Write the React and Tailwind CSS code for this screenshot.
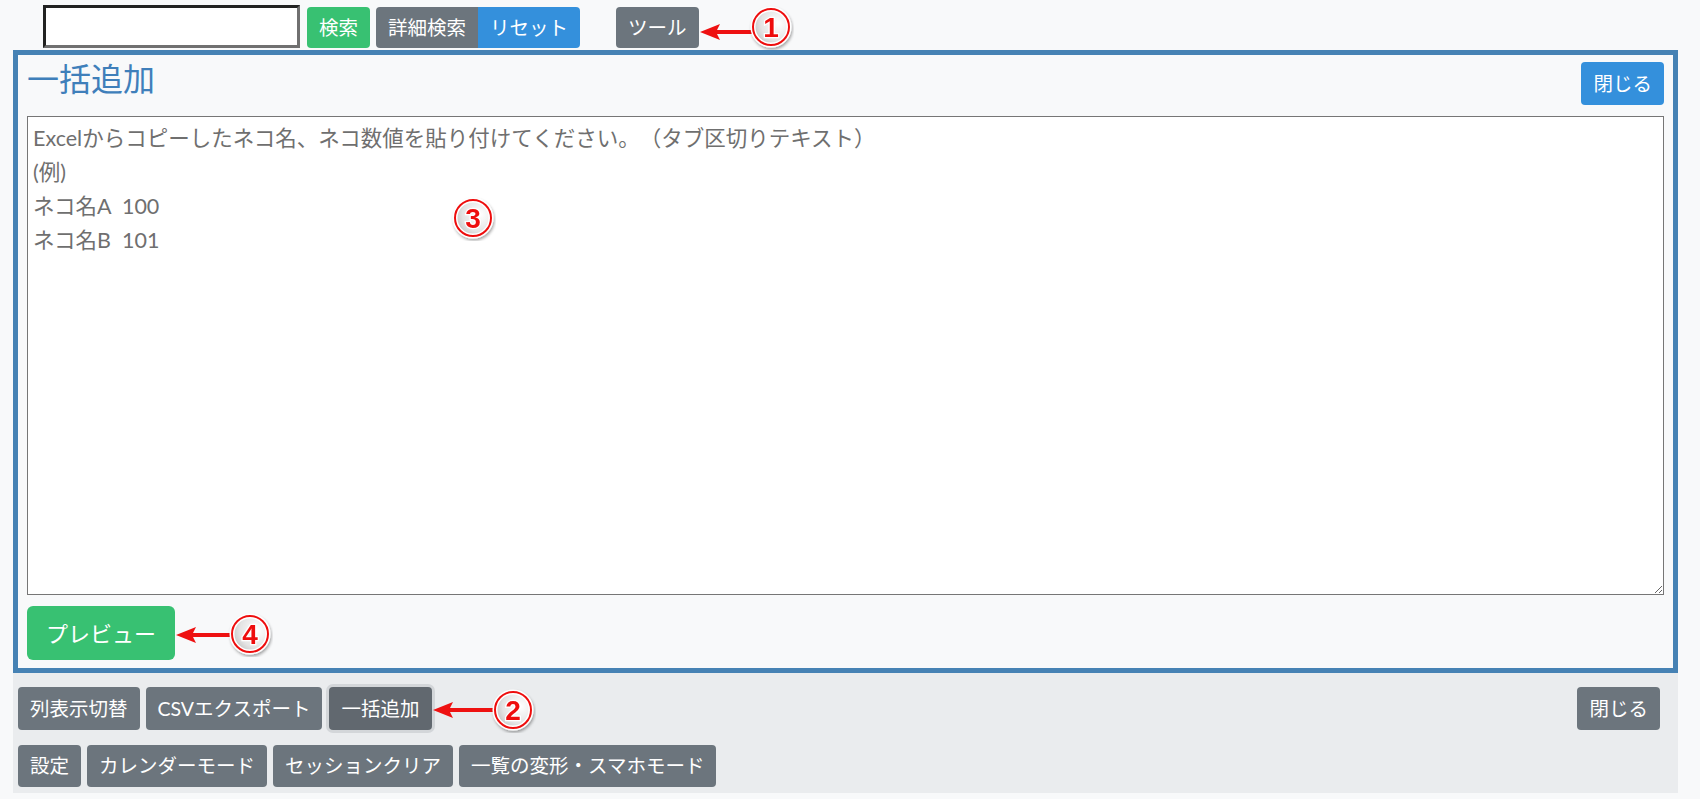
import React from 'react';

const font = { fontFamily: 'Lato, "Noto Sans CJK JP", sans-serif' };

const Btn = ({ children, color = 'gray', className = '' }) => {
  const colors = {
    gray: 'bg-[#6c757d]',
    dark: 'bg-[#61686f] ring-[3px] ring-[#d3d6d9]',
    green: 'bg-[#38c172]',
    blue: 'bg-[#3490dc]',
  };
  return (
    <button
      className={`${colors[color]} text-white text-[19.5px] leading-none px-3 rounded-[4px] flex items-center justify-center ${className}`}
    >
      {children}
    </button>
  );
};

const Marker = ({ n, x, y }) => (
  <svg
    className="absolute pointer-events-none"
    style={{ left: x - 23, top: y - 23 }}
    width="46"
    height="46"
    viewBox="0 0 46 46"
  >
    <defs>
      <radialGradient id={`g${n}`} cx="0.7" cy="0.4" r="0.8">
        <stop offset="0" stopColor="#ffffff" />
        <stop offset="0.6" stopColor="#e4e4e4" />
        <stop offset="1" stopColor="#b8b8b8" />
      </radialGradient>
      <filter id={`s${n}`} x="-30%" y="-30%" width="160%" height="160%">
        <feDropShadow dx="1" dy="2" stdDeviation="1.5" floodColor="#000" floodOpacity="0.35" />
      </filter>
    </defs>
    <g filter={`url(#s${n})`}>
      <circle cx="23" cy="23" r="18" fill={`url(#g${n})`} stroke="#fff" strokeWidth="5" />
      <circle cx="23" cy="23" r="18" fill="none" stroke="#ee1111" strokeWidth="2" />
      <text
        x="23"
        y="33"
        textAnchor="middle"
        fontSize="28"
        fontWeight="700"
        fontFamily="'Liberation Sans', Arial, sans-serif"
        fill="#ee1111"
        stroke="#fff"
        strokeWidth="2.5"
        paintOrder="stroke"
      >
        {n}
      </text>
    </g>
  </svg>
);

const Arrow = ({ x, y, w }) => (
  <svg
    className="absolute pointer-events-none"
    style={{ left: x, top: y - 9 }}
    width={w}
    height="18"
    viewBox={`0 0 ${w} 18`}
  >
    <line x1="16" y1="9" x2={w} y2="9" stroke="#ee1111" strokeWidth="4" />
    <polygon points="0,9 20,1 16,9 20,17" fill="#ee1111" />
  </svg>
);

const App = () => {
  return (
    <div className="relative min-h-screen w-[1700px] bg-[#f8f9fa]" style={font}>
      {/* top bar */}
      <div className="flex items-start h-[50px] pl-[43px] pt-[5px]">
        <input
          className="w-[257px] h-[43px] bg-white border-[3px] border-t-[#222] border-l-[#222] border-b-[#707070] border-r-[#707070] outline-none"
        />
        <Btn color="green" className="ml-[7px] mt-[2px] h-[41px]">検索</Btn>
        <div className="flex ml-[6px] mt-[2px] h-[41px]">
          <Btn className="rounded-r-none h-full">詳細検索</Btn>
          <Btn color="blue" className="rounded-l-none h-full">リセット</Btn>
        </div>
        <Btn className="ml-[36px] mt-[2px] h-[41px]">ツール</Btn>
      </div>

      {/* bulk add panel */}
      <div className="ml-[13px] w-[1665px] border-[5px] border-[#4682b4] bg-[#f8f9fa] px-[9px] pb-[8px]">
        <div className="flex items-start justify-between pt-[7px]">
          <h1 className="text-[32px] leading-[38px] text-[#3f7fba] -mt-[2px]">一括追加</h1>
          <Btn color="blue" className="h-[43px]">閉じる</Btn>
        </div>
        <textarea
          className="mt-[11px] block w-full h-[479px] bg-white border border-[#767676] px-[5px] py-[4px] text-[21.5px] leading-[34px] text-[#555] placeholder:text-[#6f6f6f] outline-none [text-spacing-trim:space-all]"
          placeholder={'Excelからコピーしたネコ名、ネコ数値を貼り付けてください。（タブ区切りテキスト）\n(例)\nネコ名A  100\nネコ名B  101'}
        />
        <button className="mt-[11px] h-[54px] px-[19px] rounded-[6px] bg-[#38c172] text-white text-[22px]">
          プレビュー
        </button>
      </div>

      {/* footer tools */}
      <div className="ml-[13px] w-[1665px] bg-[#eaecee] pl-[5px] pr-[18px] pt-[14px] pb-[6px]">
        <div className="flex gap-[6px] h-[43px]">
          <Btn>列表示切替</Btn>
          <Btn>CSVエクスポート</Btn>
          <Btn color="dark" className="ml-[1px]">一括追加</Btn>
          <Btn className="ml-auto">閉じる</Btn>
        </div>
        <div className="flex gap-[6px] h-[42px] mt-[15px]">
          <Btn>設定</Btn>
          <Btn>カレンダーモード</Btn>
          <Btn>セッションクリア</Btn>
          <Btn>一覧の変形・スマホモード</Btn>
        </div>
      </div>

      {/* annotations */}
      <Arrow x={700} y={32} w={54} />
      <Marker n="1" x={771} y={27} />
      <Marker n="3" x={473} y={218} />
      <Arrow x={176} y={635} w={54} />
      <Marker n="4" x={250} y={634} />
      <Arrow x={433} y={710} w={62} />
      <Marker n="2" x={513} y={710} />
    </div>
  );
};

export default App;
